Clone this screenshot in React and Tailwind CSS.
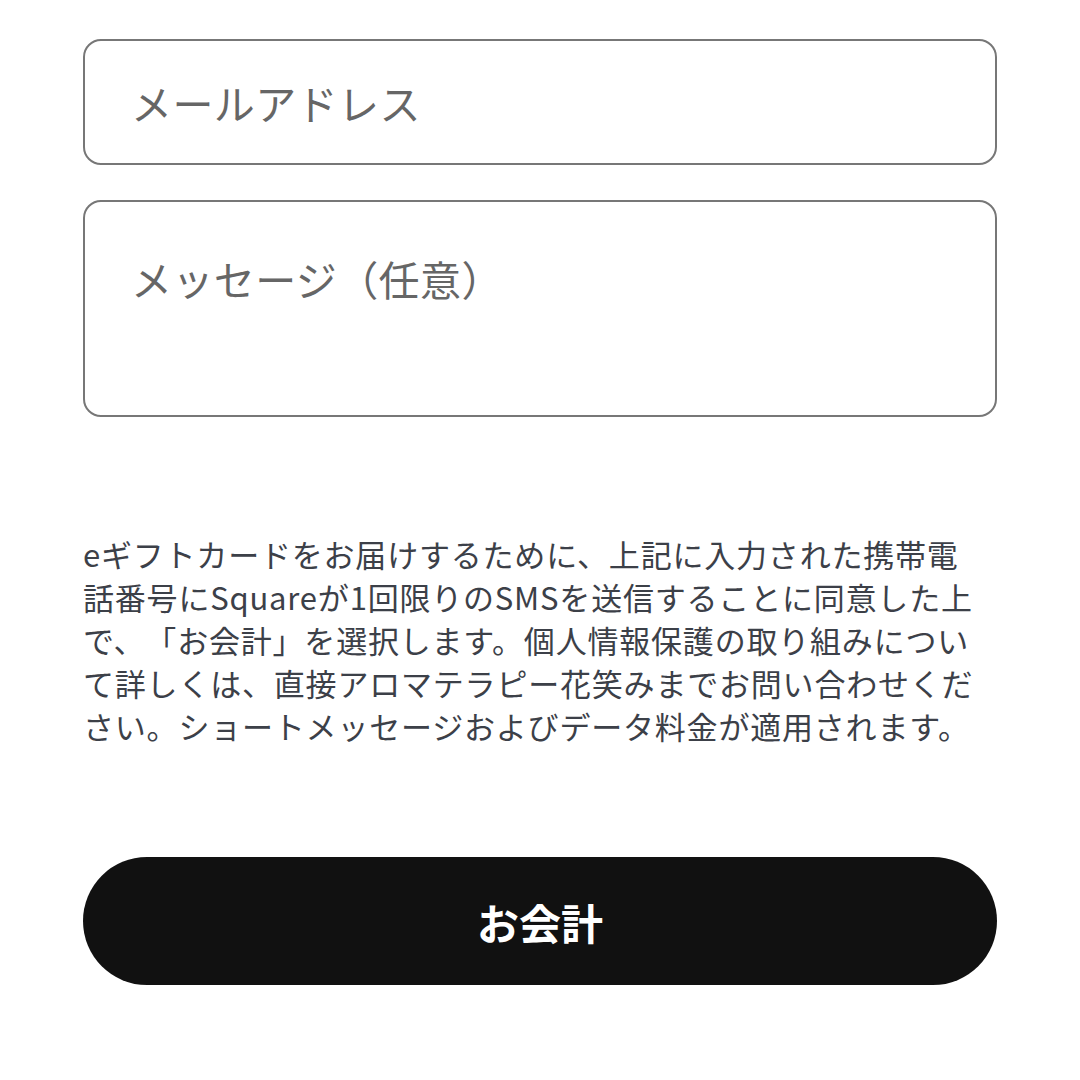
import React from 'react';

const lines = [
  'eギフトカードをお届けするために、上記に入力された携帯電',
  '話番号にSquareが1回限りのSMSを送信することに同意した上',
  'で、「お会計」を選択します。個人情報保護の取り組みについ',
  'て詳しくは、直接アロマテラピー花笑みまでお問い合わせくだ',
  'さい。ショートメッセージおよびデータ料金が適用されます。',
];

export default function App() {
  return (
    <div
      className="min-h-[1080px] w-[1080px] bg-white px-[83px] pt-[39px] [text-spacing-trim:space-all]"
      style={{ fontFamily: '"Noto Sans CJK JP", "Noto Sans", sans-serif' }}
    >
      {/* Email field */}
      <div className="flex h-[126px] items-center rounded-[18px] border-2 border-[#777777] px-[46px]">
        <span className="text-[41px] leading-[48px] tracking-[0.4px] text-[#666666]">メールアドレス</span>
      </div>

      {/* Message field */}
      <div className="mt-[35px] h-[217px] rounded-[18px] border-2 border-[#777777] px-[46px] pt-[52px]">
        <span className="text-[41px] leading-[48px] tracking-[0.4px] text-[#666666]">メッセージ（任意）</span>
      </div>

      {/* Consent text */}
      <p className="mt-[115px] text-[31px] leading-[43px] tracking-[0.8px] text-[#3c4048]">
        {lines.map((l) => (
          <span key={l} className="block whitespace-nowrap">{l}</span>
        ))}
      </p>

      {/* Checkout */}
      <button className="mt-[110px] flex h-[128px] w-full items-center justify-center rounded-full bg-[#111111] text-[42px] font-bold text-white">
        お会計
      </button>
    </div>
  );
}
